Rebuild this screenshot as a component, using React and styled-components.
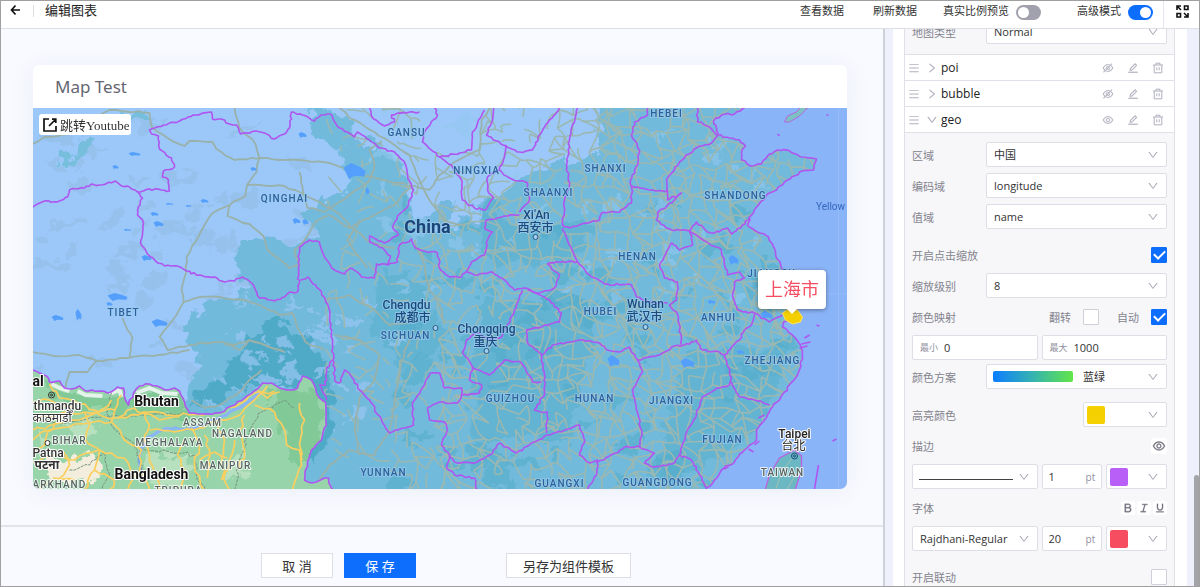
import React, { useLayoutEffect, useRef, useState } from "react";
import styled, { createGlobalStyle } from "styled-components";
import {
	AiOutlineBold,
	AiOutlineDown,
	AiOutlineEdit,
	AiOutlineEye,
	AiOutlineEyeInvisible,
	AiOutlineItalic,
	AiOutlineMenu,
	AiOutlineRight,
	AiOutlineUnderline,
} from "react-icons/ai";

const GlobalStyle = createGlobalStyle`
	* {
		box-sizing: border-box;
	}

	body {
		margin: 0;
		font-family: "Open Sans", "Noto Sans CJK SC", sans-serif;
		font-size: 11px;
		color: #333;
	}

	button, input, select {
		font: inherit;
		color: inherit;
		margin: 0;
	}
`;

const Page = styled.div`
	display: flex;
	flex-direction: column;
	height: 100vh;
	border: 1px solid #a0a0a0;
	background: #f9faff;
	overflow: hidden;
`;

const Header = styled.header`
	display: flex;
	flex: none;
	height: 28px;
	background: white;
	border-bottom: 1px solid #dddfe6;
`;

const BackButton = styled.button`
	display: flex;
	padding: 3px 8px;
	border: none;
	background: transparent;
	cursor: pointer;
`;

const Title = styled.h1`
	margin: 4px 0 0 3px;
	padding-left: 11px;
	height: 12px;
	line-height: 11px;
	font-size: 13px;
	font-weight: 400;
	border-left: 1px solid #ddd;
	color: #222;
`;

const Actions = styled.div`
	display: flex;
	align-items: center;
	gap: 29px;
	height: 20px;
	margin-left: auto;
`;

const TextButton = styled.button`
	padding: 0;
	border: none;
	background: transparent;
	line-height: 18px;
	cursor: pointer;
`;

const SwitchLabel = styled.label`
	display: flex;
	align-items: center;
	gap: 7px;
	margin-left: ${(props) => (props.$wide ? "7px" : "-3px")};
	line-height: 18px;
`;

const Switch = styled.input`
	appearance: none;
	width: 25px;
	height: 15px;
	margin: 2px 0 0;
	border-radius: 8px;
	background: #a1a1ae;
	cursor: pointer;

	&::before {
		content: "";
		display: block;
		width: 11px;
		height: 11px;
		margin: 2px;
		border-radius: 50%;
		background: white;
	}

	&:checked {
		background: #0d6efd;
	}

	&:checked::before {
		margin-left: 12px;
	}
`;

const FullButton = styled.button`
	display: flex;
	margin-left: 10px;
	padding: 3px 9px 0 11px;
	border: none;
	border-left: 1px solid #e4e6ee;
	background: transparent;
	cursor: pointer;
`;

const Body = styled.div`
	display: flex;
	flex: 1;
	min-height: 0;
`;

const Left = styled.main`
	display: flex;
	flex: 1;
	flex-direction: column;
	min-width: 0;
	border-right: 2px solid #cfd1d6;
`;

const Stage = styled.div`
	display: flex;
	flex: 1;
	min-height: 0;
	padding: 36px 36px 36px 32px;
`;

const Card = styled.section`
	display: flex;
	flex: 1;
	flex-direction: column;
	min-width: 0;
	border-radius: 7px;
	background: white;
	box-shadow: 0 2px 24px rgba(70, 90, 160, 0.08);
	overflow: hidden;
`;

const CardTitle = styled.h2`
	margin: 0;
	padding-left: 22px;
	height: 43px;
	line-height: 44px;
	font-family: "Noto Sans", sans-serif;
	font-size: 17px;
	font-weight: 400;
	color: #666671;
`;

const MapBox = styled.div`
	position: relative;
	flex: 1;
	min-height: 0;
`;

const MapSvg = styled.svg`
	display: block;
	width: 100%;
	height: 100%;
	background: #8ab4f8;
`;

const JumpLink = styled.a`
	position: absolute;
	left: 6px;
	top: 6px;
	display: flex;
	align-items: center;
	gap: 3px;
	height: 21px;
	padding: 0 2px 0 4px;
	border-radius: 3px;
	background: white;
	color: #333;
	font-family: "Liberation Serif", "Noto Sans CJK SC", serif;
	font-size: 13px;
	text-decoration: none;
`;

const Tip = styled.div`
	position: absolute;
	left: 725px;
	top: 162px;
	padding: 0 7px;
	line-height: 39px;
	border-radius: 4px;
	background: white;
	box-shadow: 0 1px 4px rgba(0, 0, 0, 0.4);
	font-size: 18px;
	color: #f54e63;

	&::after {
		content: "";
		position: absolute;
		left: 50%;
		top: 100%;
		margin-left: -5px;
		border: 5px solid transparent;
		border-top-color: white;
		border-bottom: none;
	}
`;

const Footer = styled.footer`
	display: flex;
	justify-content: center;
	padding: 26px 0 8px 8px;
	border-top: 2px solid #e2e4e9;
`;

const Button = styled.button`
	height: 25px;
	min-width: 72px;
	padding: 0 16px;
	margin-right: ${(props) => (props.$last ? "0" : props.$primary ? "90px" : "11px")};
	border: 1px solid ${(props) => (props.$primary ? "#0d6efd" : "#dcdee4")};
	background: ${(props) => (props.$primary ? "#0d6efd" : "white")};
	color: ${(props) => (props.$primary ? "white" : "#333")};
	font-size: 13px;
	line-height: 20px;
	cursor: pointer;
`;

const Side = styled.aside`
	display: flex;
	flex: none;
	width: 314px;
	padding-left: 8px;
	background: #eef1fb;
`;

const Scroller = styled.div`
	width: 294px;
	padding: 0 12px 0 11px;
	background: white;
	overflow: hidden;
`;

const Track = styled.div`
	display: flex;
	flex: 1;
	align-items: flex-end;
	justify-content: flex-end;
`;

const Thumb = styled.div`
	width: 5px;
	height: 20%;
	border-radius: 3px 3px 0 0;
	background: #a3a4a8;
`;

const Panel = styled.div`
	border: 1px solid #dfe0e8;
	background: #f7f7fa;
`;

const Form = styled.div`
	display: flex;
	flex-direction: column;
	gap: 13px;
	padding: ${(props) => (props.$top ? "7px 7px 10px" : "9px 7px")};
`;

const Group = styled.div`
	display: flex;
	flex-direction: column;
	gap: ${(props) => (props.$tight ? "4px" : "6px")};
`;

const Line = styled.div`
	display: flex;
	align-items: center;
	height: 25px;
`;

const Label = styled.label`
	flex: none;
	width: 74px;
	color: #84848e;
	white-space: nowrap;
`;

const CheckLabel = styled.label`
	display: flex;
	align-items: center;
	gap: 12px;
	color: #84848e;
`;

const Pair = styled.div`
	display: grid;
	grid-template-columns: 1fr 1fr;
	gap: 4px;
	min-width: 0;
`;

const End = styled.div`
	display: flex;
	align-items: center;
	gap: ${(props) => props.$gap || 0}px;
	margin-left: auto;
`;

const Field = styled.div`
	position: relative;
	display: flex;
	flex: ${(props) => (props.$short ? "none" : "1")};
	width: ${(props) => (props.$short ? "84px" : "auto")};
	min-width: 0;
	height: 25px;
	align-items: center;
	border: 1px solid #dedfe6;
	border-radius: 2px;
	background: white;
	color: #84848e;

	svg {
		position: absolute;
		right: 7px;
		color: #a9a9b6;
		pointer-events: none;
	}
`;

const Select = styled.select`
	appearance: none;
	width: 100%;
	height: 23px;
	padding: 0 18px 0 ${(props) => (props.$indent ? "96px" : "7px")};
	border: none;
	background: transparent;
	color: #333;
`;

const Swatch = styled.span`
	position: absolute;
	left: ${(props) => (props.$wide ? "6px" : "3px")};
	width: ${(props) => (props.$wide ? "80px" : "18px")};
	height: ${(props) => (props.$wide ? "11px" : "18px")};
	border-radius: 2px;
	background: ${(props) => props.$fill};
	pointer-events: none;
`;

const Rule = styled.span`
	position: absolute;
	left: 6px;
	right: 24px;
	top: 14px;
	border-top: 1px solid #444;
	pointer-events: none;
`;

const Input = styled.input`
	flex: 1;
	width: 100%;
	min-width: 0;
	height: 23px;
	padding: 0 7px 0 6px;
	border: none;
	background: transparent;
	color: #333;
`;

const Hint = styled.label`
	flex: none;
	padding: ${(props) => (props.$after ? "0 6px 0 0" : "0 0 0 7px")};
	font-size: ${(props) => (props.$after ? "10px" : "9px")};
	color: #9191a0;
`;

const Check = styled.input`
	appearance: none;
	display: flex;
	align-items: center;
	justify-content: center;
	width: 16px;
	height: 16px;
	border: 1px solid #cfd0da;
	border-radius: 1px;
	background: white;

	&:checked {
		border-color: #0d6efd;
		background: #0d6efd;
	}

	&:checked::before {
		content: "";
		width: 5px;
		height: 9px;
		margin-top: -3px;
		border: solid white;
		border-width: 0 2px 2px 0;
		transform: rotate(45deg);
	}
`;

const IconButton = styled.button`
	display: flex;
	padding: ${(props) => (props.$boxed ? "1px" : "0")};
	border: none;
	border-radius: 2px;
	background: ${(props) => (props.$boxed ? "white" : "transparent")};
	color: ${(props) => (props.$boxed ? "#6f6f7c" : "#b0b0be")};
	cursor: pointer;

	svg {
		stroke: currentColor;
		stroke-width: ${(props) => (props.$boxed ? "24px" : "16px")};
	}
`;

const Layers = styled.div`
	border-bottom: 1px solid #dfe0e8;
`;

const Layer = styled.div`
	display: flex;
	align-items: center;
	gap: 6px;
	height: 26px;
	padding: 0 10px 0 3px;
	border-top: 1px solid #dfe0e8;
	background: white;
	color: #b0b0be;
`;

const LayerName = styled.span`
	margin-left: -3px;
	font-size: 12px;
	line-height: 22px;
	color: #222;
`;

const Halo = styled.text`
	font-family: Roboto, "Noto Sans CJK SC", "Noto Sans", sans-serif;
	font-size: ${(props) => props.$size || 10}px;
	font-weight: ${(props) => (props.$light ? 400 : props.$bold ? 700 : 500)};
	letter-spacing: ${(props) => (props.$region ? "1px" : "normal")};
	text-anchor: ${(props) => (props.$start ? "start" : "middle")};
	fill: ${(props) => props.$ink};
	stroke: ${(props) => props.$glow};
	stroke-width: 2px;
	stroke-linejoin: round;
	paint-order: stroke;
`;

const COAST =
	"745,108 735,114 722,115 714,121 717,128 719,135 730,138 740,140 746,146 742,152 742,160 752,166 762,164 768,156 778,150 790,151 803,157 817,159 814,170 803,171 788,180 777,190 768,194 757,207 750,217 748,225 758,232 769,237 776,252 783,270 789,290 792,305 797,310 790,318 784,322 783,327 795,337 801,345 803,357 798,375 785,392 773,407 765,420 757,430 757,440 745,450 735,462 722,470 715,480 706,490";

const SOUTH =
	"33,370 40,373 47,376 50,382 60,381 65,388 72,389 80,386 86,391 100,391 108,393 118,387 124,388 126,400 129,405 134,393 140,386 150,384 160,387 166,390 175,388 180,391 185,402 190,413 203,414 220,413 232,406 245,398 258,389 263,383 272,383 283,389 292,390 298,388 303,376 312,380 320,398 326,402 327,425 322,440 312,450 306,470 305,480 312,483 325,478 329,478 333,490";

const PROVINCES = [
	"33,207 45,201 58,202 68,197 70,190 85,188 92,184 100,185 116,181 122,186 130,187 138,192",
	"138,192 150,189 162,190 170,191 169,180 163,177 164,171 175,167 172,158 160,149 159,136 152,134 150,130 155,128 180,121 197,115 212,112 213,119 225,120 230,124 237,125 241,134 255,131 265,133 275,139 285,134 290,128 292,112 303,115 315,121 321,115 331,114 340,128 355,137 358,132 370,140 380,148 395,152 405,162 408,175 414,190 408,207 398,216 393,227 399,235 385,243 370,236 370,242 385,250 391,256 388,265",
	"138,192 143,198 138,210 138,215 144,223 143,232 141,243 148,254 157,262 165,266 178,266 187,271 200,275 215,277 225,282 235,281 243,277 252,283 256,290 260,298 275,301 285,297 290,292 298,292 300,280 308,277 322,292 330,310 333,345 335,380 340,383 345,370 353,378 360,390 370,400 382,420 390,433 405,428 414,425 413,403 425,385 431,373 440,373 445,388 462,388 462,395",
	"298,280 300,247 310,240 320,242 325,257 335,270 345,274 352,268 362,277 375,278 377,264 388,265 398,262 400,245 412,239 416,248 425,251 438,253 441,270 450,277 462,277 468,270 472,262 485,255 488,240 493,232 485,228 487,220 505,216 520,215",
	"370,108 372,116 385,126 395,122 392,115 410,112 420,112",
	"435,108 438,115 425,132 423,142 440,157 460,153 472,150 473,132 485,110",
	"440,157 452,165 462,180 463,200 475,208 486,210 494,198 488,190 488,177 500,170 505,157 507,146 487,135 493,120 494,108",
	"505,145 520,152 533,150 540,135 550,120 560,108",
	"500,170 510,178 528,183 530,200 520,212",
	"578,108 573,125 570,140 567,165 570,185 565,200 563,225 570,228 580,225 600,220 602,213 620,212 632,203 632,186",
	"563,228 570,245 578,262 560,262 548,264 560,275 555,288 540,293 525,288 515,290 505,280 493,272 475,275 467,272",
	"648,108 648,115 635,122 632,135 640,150 638,165 631,180 632,186 650,190 668,191 667,180 680,162 697,148 712,143 718,136 710,127 698,122 698,108",
	"668,191 668,200 682,193 675,200 658,213 657,220 672,230 690,231 697,235 710,244 722,250 725,265 728,275 740,272 745,278 735,282 733,295 738,310 755,313 770,322 783,315",
	"690,231 697,222 708,232 715,233 728,228 732,234 743,225 750,217",
	"690,231 693,245 680,250 672,243 660,265 665,278 678,282 677,300 670,305 677,312 680,325 682,345",
	"578,262 592,277 605,284 632,285 637,297 650,302 668,303",
	"523,290 515,310 502,337 490,340 477,332 467,340 463,352 473,367 490,375 505,360 522,363 533,382 542,382",
	"528,290 550,300 562,313 560,322 527,330 528,343 542,355 545,375 545,395 535,410 548,412 547,433",
	"542,355 553,345 570,342 580,340 600,343 608,350 620,352 630,347 638,360 660,355 672,347 690,344 697,340 703,350 720,352 725,355 740,340 745,330 752,325 755,313",
	"473,367 470,380 482,385 480,393 462,395 458,403 440,402 428,408 430,420 445,422 448,430 442,445 450,455 455,462 475,463 490,455 500,443 517,453 530,445 547,435 565,430 580,425 585,440 580,455 590,463 598,460 597,475 588,490",
	"450,455 447,468 455,475 475,478 478,490",
	"638,360 643,372 633,390 637,410 642,430 640,447",
	"597,463 610,456 625,447 640,447 655,453 645,463 655,467 675,463 680,455",
	"725,355 732,378 730,385 715,390 703,397 697,415 688,430 680,455 692,460 700,475 707,488",
	"732,382 740,397 755,400 770,405",
	"333,360 327,368 326,385 320,385 327,400",
];

const WEST_ROADS = [
	"33,144 45,137 70,134 110,110 150,113 153,128 168,138 185,146 190,141 213,142 217,149 235,160 262,158 300,160 330,163 360,175 385,180 415,186 430,190",
	"235,108 240,128 256,144 260,158 257,172 248,184 246,196 230,205 212,214 205,225 196,242 187,257 187,272 182,290 184,302 177,315 160,337 168,350 190,345 215,342 235,345 250,340 285,352",
	"248,185 285,186 300,192 320,202 340,214 355,230 370,242 395,248",
	"230,205 228,216 250,224 264,236 268,250 290,268 300,265 295,250 305,240 316,222 330,215",
	"33,352 55,356 80,355 97,361 128,358 160,355 190,350",
	"97,361 88,372 70,372 66,387",
	"123,318 128,330 133,338 130,357",
	"184,302 200,297 220,297 245,300 262,306 280,315 293,313 297,325 306,342 325,350",
	"285,352 270,347 250,340 240,350 225,344",
	"192,400 205,408 220,405 240,392 250,380 262,370",
	"300,172 303,187 308,208 325,212 350,195 370,181 375,165 370,150 382,142",
	"340,108 350,118 375,132 395,145 410,155 420,180 430,200 445,220 465,225",
	"360,220 348,240 368,268",
	"430,190 440,175 455,162 480,150 482,120 490,108",
	"330,215 350,228 375,215 395,205 410,188",
	"415,240 425,265 430,290 440,305 445,325",
	"325,300 350,295 375,310 390,325 410,322",
	"415,330 405,350 400,375 395,400 390,430 375,455 350,450 330,465 320,480",
	"335,335 360,340 380,355 375,380 360,398 355,430 360,455",
];

const SOUTH_ROADS = [
	"33,419 60,414 85,412 115,418 150,412 190,415 215,413 235,407 255,393 275,391",
	"33,402 50,400 60,405 80,410",
	"33,440 50,430 70,427 90,423 112,422",
	"33,462 55,455 75,460 100,450 125,458",
	"112,422 118,405 122,395",
	"112,422 125,440 142,450 140,470 150,490",
	"100,450 95,470 85,490",
	"125,458 135,475 128,490",
	"150,430 175,432 200,428 220,420 240,415 255,400 268,386",
	"192,428 200,445 195,465 205,490",
	"215,421 225,440 222,465 230,490",
	"235,440 230,460 222,480",
	"255,405 275,412 285,430 287,445 300,450 303,460",
	"300,403 305,420 300,445 302,465 293,490",
	"40,490 55,478 75,480",
	"145,412 150,425 145,440 150,455 160,490",
	"245,415 240,430 245,450 240,470",
	"33,450 45,445 48,432 60,420 65,415",
	"185,440 178,455 185,470 180,490",
	"33,430 55,424 80,420 105,408 112,400",
	"50,384 60,398 80,404 100,412 116,410",
	"85,412 90,425 86,440 100,450",
	"62,450 70,465 60,478",
	"95,470 115,480 110,490",
	"118,418 135,408 160,420 180,417",
	"200,460 215,452 228,458",
	"258,390 268,398 280,392",
	"205,435 210,450 208,478",
];

const LAKES = [
	[355, 171, 11, 8], [135, 154, 6, 2], [116, 167, 3, 2], [303, 135, 4, 3], [159, 224, 5, 3],
	[170, 204, 4, 1], [297, 221, 4, 3], [118, 297, 10, 4], [58, 318, 6, 3], [160, 323, 8, 4],
	[79, 315, 3, 6], [110, 304, 3, 2], [128, 230, 4, 1], [205, 201, 4, 2], [368, 191, 2, 4],
	[734, 260, 5, 5], [712, 302, 4, 2], [688, 363, 7, 5], [614, 361, 6, 6], [767, 315, 6, 4], [741, 352, 4, 2],
	[147, 258, 5, 3], [155, 214, 4, 2], [189, 206, 3, 1], [254, 169, 3, 2], [306, 222, 3, 3],
];

const REGIONS = [
	["GANSU", 406, 136], ["NINGXIA", 476, 174], ["QINGHAI", 284, 202], ["SHAANXI", 548, 196],
	["SHANXI", 605, 172], ["HEBEI", 666, 117], ["SHANDONG", 735, 199], ["HENAN", 637, 260],
	["TIBET", 123, 316], ["SICHUAN", 405, 339], ["HUBEI", 600, 315], ["ANHUI", 718, 321],
	["ZHEJIANG", 772, 364], ["GUIZHOU", 510, 402], ["HUNAN", 594, 402], ["JIANGXI", 671, 404],
	["FUJIAN", 722, 443], ["YUNNAN", 383, 476], ["GUANGXI", 559, 487], ["GUANGDONG", 657, 486],
	["JIANGSU", 771, 277],
];

const FOREIGN = [
	["BIHAR", 70, 444], ["ASSAM", 203, 426], ["NAGALAND", 243, 437],
	["MEGHALAYA", 170, 446], ["MANIPUR", 226, 469], ["TRIPURA", 179, 494], ["TAIWAN", 783, 476],
];

const CITIES = [
	["Xi'An", "西安市", 537, 219, 536, 237], ["Chengdu", "成都市", 407, 309, 436, 328],
	["Chongqing", "重庆", 487, 333, 487, 351], ["Wuhan", "武汉市", 646, 308, 646, 327],
];

const random = (seed) => {
	let s = seed;
	return () => {
		s = (s * 16807) % 2147483647;
		return s / 2147483647;
	};
};

// breaks every segment into short steps that stray a little from the line
const rough = (points, amp, seed = 7, step = 4) => {
	const rnd = random(seed * 7919);
	const list = points.split(" ").map((p) => p.split(",").map(Number));
	let d = "M" + list[0];
	for (let i = 1; i < list.length; i++) {
		const [x0, y0] = list[i - 1];
		const [x1, y1] = list[i];
		const n = Math.max(1, Math.round(Math.hypot(x1 - x0, y1 - y0) / step));
		for (let k = 1; k <= n; k++) {
			const off = k === n ? 0 : amp;
			const x = x0 + ((x1 - x0) * k) / n + (rnd() - 0.5) * 2 * off;
			const y = y0 + ((y1 - y0) * k) / n + (rnd() - 0.5) * 2 * off;
			d += "L" + x.toFixed(1) + "," + y.toFixed(1);
		}
	}
	return d;
};

const makeNet = () => {
	const rnd = random(4211);
	const size = 11;
	const nodes = [];
	for (let r = 0; r < 37; r++) {
		nodes.push([]);
		for (let c = 0; c < 47; c++) {
			nodes[r].push([330 + c * size + (rnd() - 0.5) * 12, 102 + r * size + (rnd() - 0.5) * 12]);
		}
	}
	let d = "";
	const join = (a, b) => {
		const mx = (a[0] + b[0]) / 2 + (rnd() - 0.5) * 6;
		const my = (a[1] + b[1]) / 2 + (rnd() - 0.5) * 6;
		d += `M${a[0].toFixed(1)},${a[1].toFixed(1)}Q${mx.toFixed(1)},${my.toFixed(1)} ${b[0].toFixed(1)},${b[1].toFixed(1)}`;
	};
	for (let r = 0; r < 36; r++) {
		for (let c = 0; c < 46; c++) {
			const [x, y] = nodes[r][c];
			let chance = x < 390 ? 0.12 : x < 430 ? 0.3 : x < 580 ? 0.58 : 0.76;
			// the Inner Mongolian desert has hardly any road
			if (y < 152 && x > 420 && x < 475) chance = 0;
			if (y < 150 && x > 495 && x < 550) chance = 0.2;
			if (rnd() < chance) join(nodes[r][c], nodes[r][c + 1]);
			if (rnd() < chance) join(nodes[r][c], nodes[r + 1][c]);
			if (rnd() < chance * 0.4) join(nodes[r][c], nodes[r + 1][c + 1]);
		}
	}
	return d;
};

const makePatches = (seed, count, x0, x1, y0, y1, size) => {
	const rnd = random(seed);
	const list = [];
	for (let i = 0; i < count; i++) {
		list.push([x0 + rnd() * (x1 - x0), y0 + rnd() * (y1 - y0), size * (0.4 + rnd()), size * (0.2 + rnd() * 0.5), rnd() * 90 - 45]);
	}
	return list;
};

const NET = makeNet();
const DARK = makePatches(91, 90, 400, 790, 200, 490, 13);
const LIGHT = makePatches(17, 60, 380, 780, 108, 300, 9);
const RIDGES = makePatches(53, 70, 40, 330, 120, 375, 12);
const SNOW = makePatches(29, 45, 220, 400, 290, 430, 8);

const Patches = ({ list, fill, opacity }) => (
	<g fill={fill} opacity={opacity}>
		{list.map(([x, y, rx, ry, a], i) => (
			<ellipse key={i} cx={x} cy={y} rx={rx} ry={ry} transform={`rotate(${a} ${x} ${y})`} />
		))}
	</g>
);

const ChinaMap = () => {
	const ink = "#2d619b";
	const glow = "rgba(156, 204, 240, 0.7)";
	return (
		<MapSvg viewBox="33 108 815 381" preserveAspectRatio="xMidYMid slice">
			<defs>
				<clipPath id="land">
					<path d={`M33,100 L745,100 L${COAST} L${SOUTH.split(" ").reverse().join(" ")}Z`} />
				</clipPath>
				<filter id="ragged" x="-5%" y="-5%" width="110%" height="110%">
					<feTurbulence type="fractalNoise" baseFrequency="0.07" numOctaves="4" seed="3" />
					<feDisplacementMap in="SourceGraphic" scale="26" xChannelSelector="R" yChannelSelector="G" />
				</filter>
			</defs>

			<path d={`M${SOUTH} L33,490Z`} fill="#98d4a9" />
			<g filter="url(#ragged)">
				<path d="M50,385 L90,395 180,395 190,415 120,415 60,405Z M270,395 320,390 325,430 300,470 285,430Z" fill="#82c998" />
				<path d="M50,462 90,456 110,472 80,486 50,480Z" fill="#f2eddc" />
				<path d="M150,455 190,455 185,485 150,485Z M60,420 100,425 80,440Z M40,430 60,440 40,455Z M225,475 240,450 250,470Z" fill="#b7e0bf" />
			</g>
			<path d="M52,384 60,388 70,391 M78,391 86,395 103,396 M110,394 120,390 122,397 M137,393 150,388 162,393 178,394" fill="none" stroke="#e4f4ea" strokeWidth="4" strokeLinejoin="round" />
			<path d={rough("141,480 140,455 147,438 165,429 195,428 220,418 240,408 262,391", 1, 6)} fill="none" stroke="#8ab4f8" strokeWidth="3" />
			<g fill="none" stroke="#75917f" strokeWidth="1" strokeDasharray="3 1">
				<path d={rough("112,393 108,410 112,425 125,437 138,450 142,470", 2, 3)} />
				<path d={rough("33,420 60,424 90,418 140,415 190,414", 1, 5)} />
				<path d={rough("140,450 170,452 195,455 197,475 205,490", 2, 8)} />
				<path d={rough("235,490 240,460 250,430 262,412 285,400 295,408", 2, 9)} />
				<path d={rough("70,470 90,465 104,452 110,475 102,490", 2, 12)} />
			</g>
			<g fill="none" strokeLinejoin="round">
				{SOUTH_ROADS.map((road, i) => (
					<path key={i} d={rough(road, 2, i + 20, 6)} stroke="#fbcf5f" strokeWidth="1.7" />
				))}
			</g>

			<g clipPath="url(#land)">
				<rect x="33" y="100" width="814" height="400" fill="#9bc8f9" />
				<g filter="url(#ragged)">
					<Patches list={RIDGES} fill="#94bfe9" opacity="0.7" />
					<path d="M320,100 350,130 400,160 412,215 440,235 470,225 490,200 520,180 550,165 600,155 600,90 860,90 860,510 150,510 190,400 200,360 180,330 215,300 250,290 235,260 240,235 270,235 290,250 320,235 300,210 350,190 340,150 310,130Z" fill="#72badb" />
					<path d="M60,162 75,152 80,140 95,138 85,155 70,165Z M120,118 145,112 150,118 125,122Z" fill="#76bedc" />
					<path d="M190,410 205,390 230,365 250,335 275,320 310,340 330,370 335,430 310,470 300,390 260,385Z" fill="#50aac8" />
					<path d="M495,215 540,225 600,225 570,260 500,265 480,240Z M380,270 420,275 450,340 410,370 370,330Z M480,300 600,300 570,440 470,440Z M690,350 790,345 760,430 700,470 650,480Z" fill="#5fb1cf" opacity="0.8" />
					<Patches list={DARK} fill="#53acc9" opacity="0.55" />
					<Patches list={LIGHT} fill="#93c8ee" opacity="0.6" />
					<Patches list={SNOW} fill="#98c7f3" opacity="0.7" />
				</g>
				<path d={NET} fill="none" stroke="#9ab8b1" strokeWidth="1.6" />
				<g fill="none" stroke="#99b1a9" strokeWidth="1.8" strokeLinejoin="round">
					{WEST_ROADS.map((road, i) => (
						<path key={i} d={rough(road, 1, i + 3, 6)} />
					))}
				</g>
				<g fill="#549ffb">
					{LAKES.map(([x, y, rx, ry], i) => (
						<path key={i} d={`M${x - rx},${y - ry * 0.4} L${x - rx * 0.3},${y - ry} ${x + rx * 0.5},${y - ry * 0.5} ${x + rx},${y} ${x + rx * 0.9},${y + ry * 0.7} ${x},${y + ry * 0.6} ${x - rx * 0.5},${y + ry}Z`} />
					))}
				</g>
			</g>

			<path d="M765,492 770,475 780,458 795,450 802,456 802,470 795,492Z" fill="#6bb8c4" stroke="#bb62de" strokeWidth="1.3" />
			<path d="M776,490 783,470 793,458 M787,490 796,475" fill="none" stroke="#a6c1b0" />
			<path d="M785,122 788,116 797,112 801,107 808,108 800,116 790,122Z" fill="#7cc1c4" stroke="#bb62de" />
			<path d="M839,108 V490 M790,294 H848" stroke="#9fc4fb" strokeWidth="1" opacity="0.6" />

			<g fill="none" stroke="#af55f0" strokeWidth="1.6" strokeLinejoin="round">
				{PROVINCES.map((border, i) => (
					<path key={i} d={rough(border, 1, i + 11, 3)} />
				))}
				<path d={rough(COAST, 1, 31, 3)} />
				<path d={rough(SOUTH, 1, 5)} />
				<path d="M819,465 815,489 M802,344 811,342 M800,348 808,346 M805,338 810,335 M759,418 765,415 M755,445 760,441 M749,449 754,452 M729,467 724,469 M778,134 780,136 M827,115 829,115 M817,325 820,326 M833,441 837,439" />
			</g>
			<path d="M783,313 789,309 798,310 803,317 801,322 793,324 786,320Z" fill="#f5d000" stroke="#f8e267" />

			{REGIONS.map(([name, x, y]) => (
				<Halo key={name} $region $ink={ink} $glow={glow} x={x + 1} y={y}>{name}</Halo>
			))}
			{FOREIGN.map(([name, x, y]) => (
				<Halo key={name} $region $ink="#56635f" $glow="rgba(255, 255, 255, 0.8)" x={x} y={y}>{name}</Halo>
			))}
			{CITIES.map(([name, local, x, y, cx, cy]) => (
				<g key={name}>
					<Halo $size={12} $ink="#1d4a7c" $glow={glow} x={x} y={y}>{name}</Halo>
					<Halo $size={12} $ink="#1d4a7c" $glow={glow} x={local === "成都市" ? x + 6 : x - 1} y={y + 13}>{local}</Halo>
					<circle cx={cx} cy={cy} r="2.5" fill="#9fd0ee" stroke="#2a5788" />
				</g>
			))}
			<Halo $size={18} $bold $ink="#1b4578" $glow={glow} x={428} y={233}>China</Halo>
			<Halo $size={10} $light $ink="#3566bd" $glow="transparent" x={831} y={210}>Yellow</Halo>
			<Halo $size={14} $bold $ink="#111" $glow="white" x={157} y={406}>Bhutan</Halo>
			<Halo $size={14} $bold $ink="#111" $glow="white" x={152} y={479}>Bangladesh</Halo>
			<Halo $size={14} $bold $start $ink="#111" $glow="white" x={33} y={386}>al</Halo>
			<Halo $region $start $ink="#56635f" $glow="rgba(255, 255, 255, 0.8)" x={33} y={488}>ARKHAND</Halo>
			<Halo $size={12} $start $ink="#333" $glow="white" x={34} y={410}>thmandu</Halo>
			<Halo $size={12} $light $start $ink="#333" $glow="white" x={33} y={422}>काठमाडौँ</Halo>
			<Halo $size={12} $start $ink="#333" $glow="white" x={33} y={457}>Patna</Halo>
			<Halo $size={12} $bold $start $ink="#333" $glow="white" x={35} y={469}>पटना</Halo>
			<Halo $size={12} $ink="#222" $glow="white" x={795} y={438}>Taipei</Halo>
			<Halo $size={12} $light $ink="#222" $glow="white" x={794} y={450}>台北</Halo>
			<g fill="none" stroke="#333">
				<circle cx="52" cy="395" r="3" />
				<circle cx="52" cy="395" r="1" />
				<circle cx="48" cy="443" r="2.5" fill="white" />
				<circle cx="795" cy="456" r="3" stroke="#1d4a7c" />
				<circle cx="795" cy="456" r="1" stroke="#1d4a7c" />
			</g>
		</MapSvg>
	);
};

const TrashIcon = () => (
	<svg width="12" height="12" viewBox="0 0 120 120" fill="none">
		<path d="M10 30H110M40 30V12H80V30M22 30V108H98V30M48 53V83M72 53V83" strokeWidth="10" />
	</svg>
);

const PickList = ({ id, label, value, children, short, indent }) => (
	<Field $short={short}>
		{children}
		<Select id={id} aria-label={label} $indent={indent}>
			<option>{value}</option>
		</Select>
		<AiOutlineDown size={12} />
	</Field>
);

const PickLine = ({ id, label, value, children, indent }) => (
	<Line>
		<Label htmlFor={id}>{label}</Label>
		<PickList id={id} value={value} indent={indent}>{children}</PickList>
	</Line>
);

const LAYERS = [
	{ name: "poi" },
	{ name: "bubble" },
	{ name: "geo", open: true },
];

const App = () => {
	const scroller = useRef(null);
	const [ratio, setRatio] = useState(false);
	const [advanced, setAdvanced] = useState(true);

	// opens on the layer settings, a little below the top of the form
	useLayoutEffect(() => {
		scroller.current.scrollTop = 18;
	}, []);

	return (
		<Page>
			<GlobalStyle />
			<Header>
				<BackButton aria-label="返回">
					<svg width="13" height="12" viewBox="0 0 13 12" fill="none" stroke="#111" strokeWidth="1.7">
						<path d="M11 6H3M6.5 1.5L2.5 6L6.5 10.5" />
					</svg>
				</BackButton>
				<Title>编辑图表</Title>
				<Actions>
					<TextButton>查看数据</TextButton>
					<TextButton>刷新数据</TextButton>
					<SwitchLabel>
						真实比例预览
						<Switch type="checkbox" role="switch" checked={ratio} onChange={() => setRatio(!ratio)} />
					</SwitchLabel>
					<SwitchLabel $wide>
						高级模式
						<Switch type="checkbox" role="switch" checked={advanced} onChange={() => setAdvanced(!advanced)} />
					</SwitchLabel>
				</Actions>
				<FullButton aria-label="全屏">
					<svg width="15" height="15" viewBox="0 0 15 15" fill="none" stroke="#111" strokeWidth="1.6">
						<path d="M9.5 2H13V5.5H9.5ZM2 9.5H5.5V13H2ZM2 6V2H6M2 2L6 6M13 9V13H9M13 13L9 9" />
					</svg>
				</FullButton>
			</Header>
			<Body>
				<Left>
					<Stage>
						<Card>
							<CardTitle>Map Test</CardTitle>
							<MapBox>
								<ChinaMap />
								<JumpLink href="#youtube">
									<svg width="14" height="14" viewBox="0 0 14 14" fill="none" stroke="#111" strokeWidth="1.7">
										<path d="M6 1H1V13H13V8M6 8L12 2M9 1.2H12.8V5" />
									</svg>
									<span>跳转Youtube</span>
								</JumpLink>
								<Tip>上海市</Tip>
							</MapBox>
						</Card>
					</Stage>
					<Footer>
						<Button>取 消</Button>
						<Button $primary>保 存</Button>
						<Button $last>另存为组件模板</Button>
					</Footer>
				</Left>
				<Side>
					<Scroller ref={scroller}>
						<Panel>
							<Form $top>
								<PickLine id="mapType" label="地图类型" value="Normal" />
							</Form>
							<Layers>
								{LAYERS.map(({ name, open }) => (
									<Layer key={name}>
										<AiOutlineMenu size={12} />
										<IconButton aria-label={name}>
											{open ? <AiOutlineDown size={12} /> : <AiOutlineRight size={12} />}
										</IconButton>
										<LayerName>{name}</LayerName>
										<End $gap={13}>
											<IconButton aria-label="显示">
												{open ? <AiOutlineEye size={12} /> : <AiOutlineEyeInvisible size={12} />}
											</IconButton>
											<IconButton aria-label="编辑"><AiOutlineEdit size={12} /></IconButton>
											<IconButton aria-label="删除"><TrashIcon /></IconButton>
										</End>
									</Layer>
								))}
							</Layers>
							<Form>
								<Group>
									<PickLine id="area" label="区域" value="中国" />
									<PickLine id="code" label="编码域" value="longitude" />
									<PickLine id="value" label="值域" value="name" />
								</Group>
								<Group>
									<Line>
										<Label htmlFor="zoomOn">开启点击缩放</Label>
										<End><Check id="zoomOn" type="checkbox" defaultChecked /></End>
									</Line>
									<PickLine id="level" label="缩放级别" value="8" />
									<Line>
										<Label as="span">颜色映射</Label>
										<End $gap={18}>
											<CheckLabel>
												翻转
												<Check type="checkbox" />
											</CheckLabel>
											<CheckLabel>
												自动
												<Check type="checkbox" defaultChecked />
											</CheckLabel>
										</End>
									</Line>
									<Group $tight>
										<Pair>
											<Field>
												<Hint htmlFor="min">最小</Hint>
												<Input id="min" defaultValue="0" />
											</Field>
											<Field>
												<Hint htmlFor="max">最大</Hint>
												<Input id="max" defaultValue="1000" />
											</Field>
										</Pair>
										<PickLine id="scheme" label="颜色方案" value="蓝绿" indent>
											<Swatch $wide $fill="linear-gradient(90deg, #0d7eff, #35b3b0 50%, #62e549)" />
										</PickLine>
									</Group>
								</Group>
								<Group>
									<Line>
										<Label htmlFor="highlight">高亮颜色</Label>
										<End>
											<PickList id="highlight" short><Swatch $fill="#f5d000" /></PickList>
										</End>
									</Line>
									<Line>
										<Label as="span">描边</Label>
										<End><IconButton $boxed aria-label="描边"><AiOutlineEye size={14} /></IconButton></End>
									</Line>
									<Pair>
										<PickList label="线型"><Rule /></PickList>
										<Pair>
											<Field>
												<Input id="stroke" defaultValue="1" />
												<Hint $after htmlFor="stroke">pt</Hint>
											</Field>
											<PickList label="描边颜色"><Swatch $fill="#b75ff6" /></PickList>
										</Pair>
									</Pair>
									<Line>
										<Label as="span">字体</Label>
										<End $gap={2}>
											<IconButton $boxed aria-label="加粗"><AiOutlineBold size={12} /></IconButton>
											<IconButton $boxed aria-label="斜体"><AiOutlineItalic size={12} /></IconButton>
											<IconButton $boxed aria-label="下划线"><AiOutlineUnderline size={12} /></IconButton>
										</End>
									</Line>
									<Pair>
										<PickList label="字体" value="Rajdhani-Regular" />
										<Pair>
											<Field>
												<Input id="size" defaultValue="20" />
												<Hint $after htmlFor="size">pt</Hint>
											</Field>
											<PickList label="字体颜色"><Swatch $fill="#f64e60" /></PickList>
										</Pair>
									</Pair>
								</Group>
								<Line>
									<Label htmlFor="linked">开启联动</Label>
									<End><Check id="linked" type="checkbox" /></End>
								</Line>
							</Form>
						</Panel>
					</Scroller>
					<Track><Thumb /></Track>
				</Side>
			</Body>
		</Page>
	);
};

export default App;
